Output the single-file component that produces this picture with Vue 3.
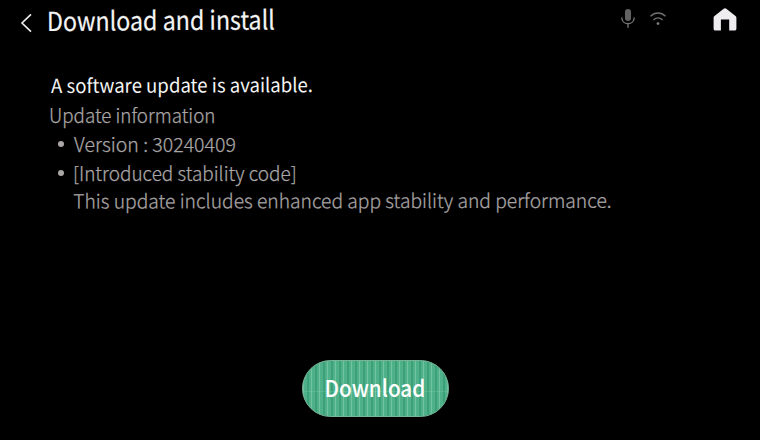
<script setup>
const title = 'Download and install'
const notes = ['Version : 30240409', '[Introduced stability code]']
</script>

<template>
  <main class="screen">
    <header class="bar">
      <svg class="back" width="14" height="22" viewBox="0 0 14 22"><path d="M11 2.4 2 11l9 8.6" /></svg>
      <h1 class="title"><span>{{ title }}</span></h1>
      <div class="status">
        <svg class="mic" width="16" height="22" viewBox="0 0 16 22">
          <rect x="5" y="1" width="6" height="12" rx="3" />
          <path d="M1.8 9.5c0 4 2.8 6.2 6.2 6.2s6.2-2.2 6.2-6.2M8 15.7v4" />
        </svg>
        <svg class="wifi" width="18" height="18" viewBox="0 0 18 18">
          <path d="M1.5 6.2c4.5-4.3 10.5-4.3 15 0M4.4 10c2.8-2.6 6.4-2.6 9.2 0" />
          <circle cx="9" cy="13.6" r="1.4" />
        </svg>
        <svg class="home" width="26" height="26" viewBox="0 0 26 26">
          <path d="M13 1.2c.5 0 .9.2 1.3.5l9.2 7.3c.6.5.9 1 .9 1.7v11c0 1.1-.7 1.8-1.8 1.8h-5.4V12.6H8.9v10.9H3.4c-1.1 0-1.8-.7-1.8-1.8v-11c0-.7.3-1.2.9-1.7l9.2-7.3c.4-.3.8-.5 1.3-.5Z" />
        </svg>
      </div>
    </header>

    <section class="content">
      <p class="line lead"><span>A software update is available.</span></p>
      <p class="line info"><span>Update information</span></p>
      <ul class="notes">
        <li v-for="(note, i) in notes" :key="note" class="line" :class="'note-' + i">
          <i class="dot"></i><span>{{ note }}</span>
        </li>
      </ul>
      <p class="line detail"><span>This update includes enhanced app stability and performance.</span></p>
    </section>

    <footer class="actions">
      <button class="download"><span>Download</span></button>
    </footer>
  </main>
</template>

<style>
body { background: #000; }
</style>

<style scoped>
.screen {
  box-sizing: border-box;
  width: 760px;
  height: 440px;
  display: flex;
  flex-direction: column;
  overflow: hidden;
  background: #000;
  color: #fff;
  font-family: "Noto Sans CJK KR", "Noto Sans", sans-serif;
}
.bar { display: flex; height: 40px; padding: 0 22px 0 20px; }
.back { margin-top: 12px; fill: none; stroke: #eee; stroke-width: 1.6; }
.title { width: 260px; margin: 0 0 0 13px; font-size: 26px; font-weight: 400; line-height: 39px; color: #f4f4f4; -webkit-text-stroke: 0.2px #f4f4f4; }
span { display: inline-block; white-space: nowrap; transform-origin: 0 80%; }
.title span { transform: rotate(-0.4deg) scaleX(0.893); }
.status { display: flex; margin-left: auto; }
.mic { margin: 8px 13px 0 0; fill: #626262; }
.mic path { fill: none; stroke: #777; stroke-width: 1.4; }
.wifi { margin: 10px 45px 0 0; fill: #808080; }
.wifi path { fill: none; stroke: #707070; stroke-width: 1.4; }
.home { margin-top: 7px; fill: #efedef; }
.content { padding: 30px 0 0 49px; font-size: 19.5px; font-weight: 300; color: #aaa6a6; -webkit-text-stroke: 0.25px #aaa6a6; }
.line { margin: 0; height: 29.5px; line-height: 30px; }
.lead { padding-left: 2px; color: #f4f4f4; font-weight: 400; -webkit-text-stroke: 0; }
.lead span { transform: rotate(-0.2deg) scaleX(0.953); }
.info span { transform: scaleX(0.962); }
.notes { list-style: none; margin: 0; padding: 0 0 0 9px; }
.notes .line { display: flex; align-items: center; line-height: 26px; }
.note-1 span { transform: translateX(-1px) scaleX(0.973); }
.dot { width: 6px; height: 6px; margin-right: 10px; border-radius: 50%; background: #aaa6a6; }
.line.detail { padding-left: 25px; margin-top: -0.5px; line-height: 26px; }
.detail span { transform: translate(-0.7px, -0.5px) rotate(-0.07deg) scaleX(0.986); }
.actions { display: flex; justify-content: center; margin-top: auto; padding: 0 10px 23px 0; }
.download {
  width: 147px;
  height: 57px;
  padding: 0 0 4px;
  border: 1px solid #78b597;
  border-radius: 29px;
  background:
    linear-gradient(transparent 30px, rgba(150, 220, 190, 0.2) 30px 31px, transparent 31px),
    repeating-linear-gradient(90deg, rgba(165, 220, 190, 0.4) 0 1px, transparent 1px 4px, rgba(15, 120, 80, 0.3) 4px 6px, transparent 6px 8px),
    #4fb189;
  color: #fff;
  font: 500 23px/50px "Noto Sans CJK KR", "Noto Sans", sans-serif;
}
.download span { transform-origin: 50% 80%; transform: scaleX(0.9); }
</style>
